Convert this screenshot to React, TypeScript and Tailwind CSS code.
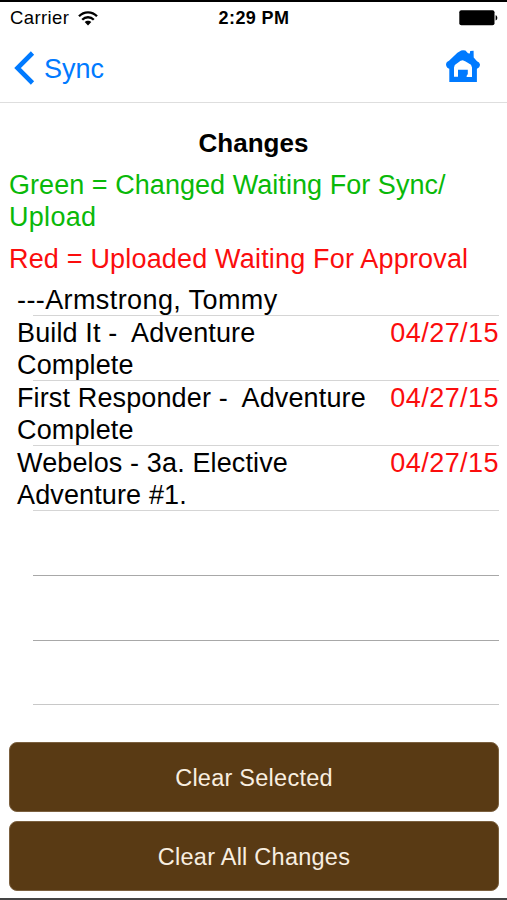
import React from 'react';

interface Change {
  title: string;
  date: string;
}

const changes: Change[] = [
  { title: 'Build It -  Adventure Complete', date: '04/27/15' },
  { title: 'First Responder -  Adventure Complete', date: '04/27/15' },
  { title: 'Webelos - 3a. Elective Adventure #1.', date: '04/27/15' },
];

const WifiIcon = () => (
  <svg width="20" height="15" viewBox="0 0 20 15" fill="none" stroke="#000" strokeWidth="2.3">
    <path d="M1 5.3C6 .1 14 .1 19 5.3" />
    <path d="M4.2 8.8C7.4 5.4 12.6 5.4 15.8 8.8" />
    <path d="M10 14.4 6.7 11.1C8.5 9.3 11.5 9.3 13.3 11.1Z" fill="#000" stroke="none" />
  </svg>
);

const BatteryIcon = () => (
  <svg width="39" height="16" viewBox="0 0 39 16">
    <rect x=".3" y=".3" width="35.2" height="15" rx="2" fill="#000" />
    <path d="M36.6 5.2C38.9 5.8 38.9 9.8 36.6 10.4Z" fill="#000" />
  </svg>
);

const HomeIcon = () => (
  <svg width="34" height="33" viewBox="0 0 34 33" fill="#007aff">
    <path
      fillRule="evenodd"
      d="M15.2.4Q17.4-.2 19.4.6L22 3.2 23.8 3.4 24.2 1 27.6.8 27.7 7.4 31 11.2Q33.6 11.8 34 14.6 33.8 17.8 30.9 18.8V32H3.3V18.8Q.6 18.2 0 14.8 0 12 3 10.8L11.4 2.8ZM16.8 10.2 14.6 10.8 8.8 15 8 17.6V26.8H12V19.8H21.8V24L20.4 26.2 21 27H26V17.6L25 14.8 19.6 11.4Z"
    />
  </svg>
);

const StatusBar = () => (
  <div className="flex h-[33px] items-center justify-between border-t-2 border-black pt-px pr-[9px] pl-[10px] text-[18.5px]">
    <div className="flex w-[120px] items-center gap-[9px]">
      <span className="tracking-[0.4px]">Carrier</span>
      <WifiIcon />
    </div>
    <span className="text-[18px] font-bold tracking-[0.4px]">2:29 PM</span>
    <div className="flex w-[120px] justify-end"><BatteryIcon /></div>
  </div>
);

const NavBar = () => (
  <div className="flex h-[70px] items-center justify-between border-b border-[#dedede] pr-[27px] pl-[14px] text-[#007aff]">
    <button className="flex items-center gap-[9px] text-[27px]">
      <svg width="21" height="34" viewBox="0 0 21 34" fill="none" stroke="currentColor" strokeWidth="4.6">
        <path d="M18.5 2 3.5 17 18.5 32" />
      </svg>
      <span className="pt-[3px]">Sync</span>
    </button>
    <button className="pb-[2px]"><HomeIcon /></button>
  </div>
);

const App: React.FC = () => {
  return (
    <div className="flex h-[900px] w-[507px] flex-col overflow-hidden border-b-2 border-[#444] bg-white font-['Liberation_Sans',sans-serif] text-black">
      <StatusBar />
      <NavBar />

      <div className="px-[9px] pt-[24px] text-[27px] leading-[32px]">
        <h1 className="text-center text-[26px] font-bold">Changes</h1>
        <p className="mt-[10px] tracking-[0.05px] text-[#09b909]">Green = Changed Waiting For Sync/<br /><span className="tracking-[0.3px]">Upload</span></p>
        <p className="mt-[10px] tracking-[0.18px] text-[#fb0d0d]">Red = Uploaded Waiting For Approval</p>
      </div>

      <div className="mt-[9px] pr-[8px] pl-[17px] text-[27px] leading-[32px]">
        <div className="h-[31px] tracking-[0.4px]">---Armstrong, Tommy</div>
        {changes.map((change, idx) => (
          <div key={idx} className="h-[65px]">
            <div className="ml-4 h-px bg-[#d5d5d5]"></div>
            <div className="flex justify-between pt-px">
              <span className="w-[355px] tracking-[0.13px] whitespace-pre-wrap">{change.title}</span>
              <span className="tracking-[0.45px] text-[#fb0d0d]">{change.date}</span>
            </div>
          </div>
        ))}
        <div className="ml-4 h-[65px] border-t border-[#d5d5d5]"></div>
        <div className="ml-4 h-[65px] border-t border-[#a8a8a8]"></div>
        <div className="ml-4 h-[64px] border-t border-[#a8a8a8]"></div>
        <div className="ml-4 border-t border-[#c8c8c8]"></div>
      </div>

      <div className="mt-auto flex flex-col gap-[9px] pr-[8px] pb-[7px] pl-[9px] text-[23.5px] tracking-[0.25px] text-[#f8eee0]">
        <button className="h-[70px] rounded-lg border border-[#7b603f] bg-[#593a14] pt-[4px]">Clear Selected</button>
        <button className="h-[70px] rounded-lg border border-[#7b603f] bg-[#593a14] pt-[4px]">Clear All Changes</button>
      </div>
    </div>
  );
};

export default App;
